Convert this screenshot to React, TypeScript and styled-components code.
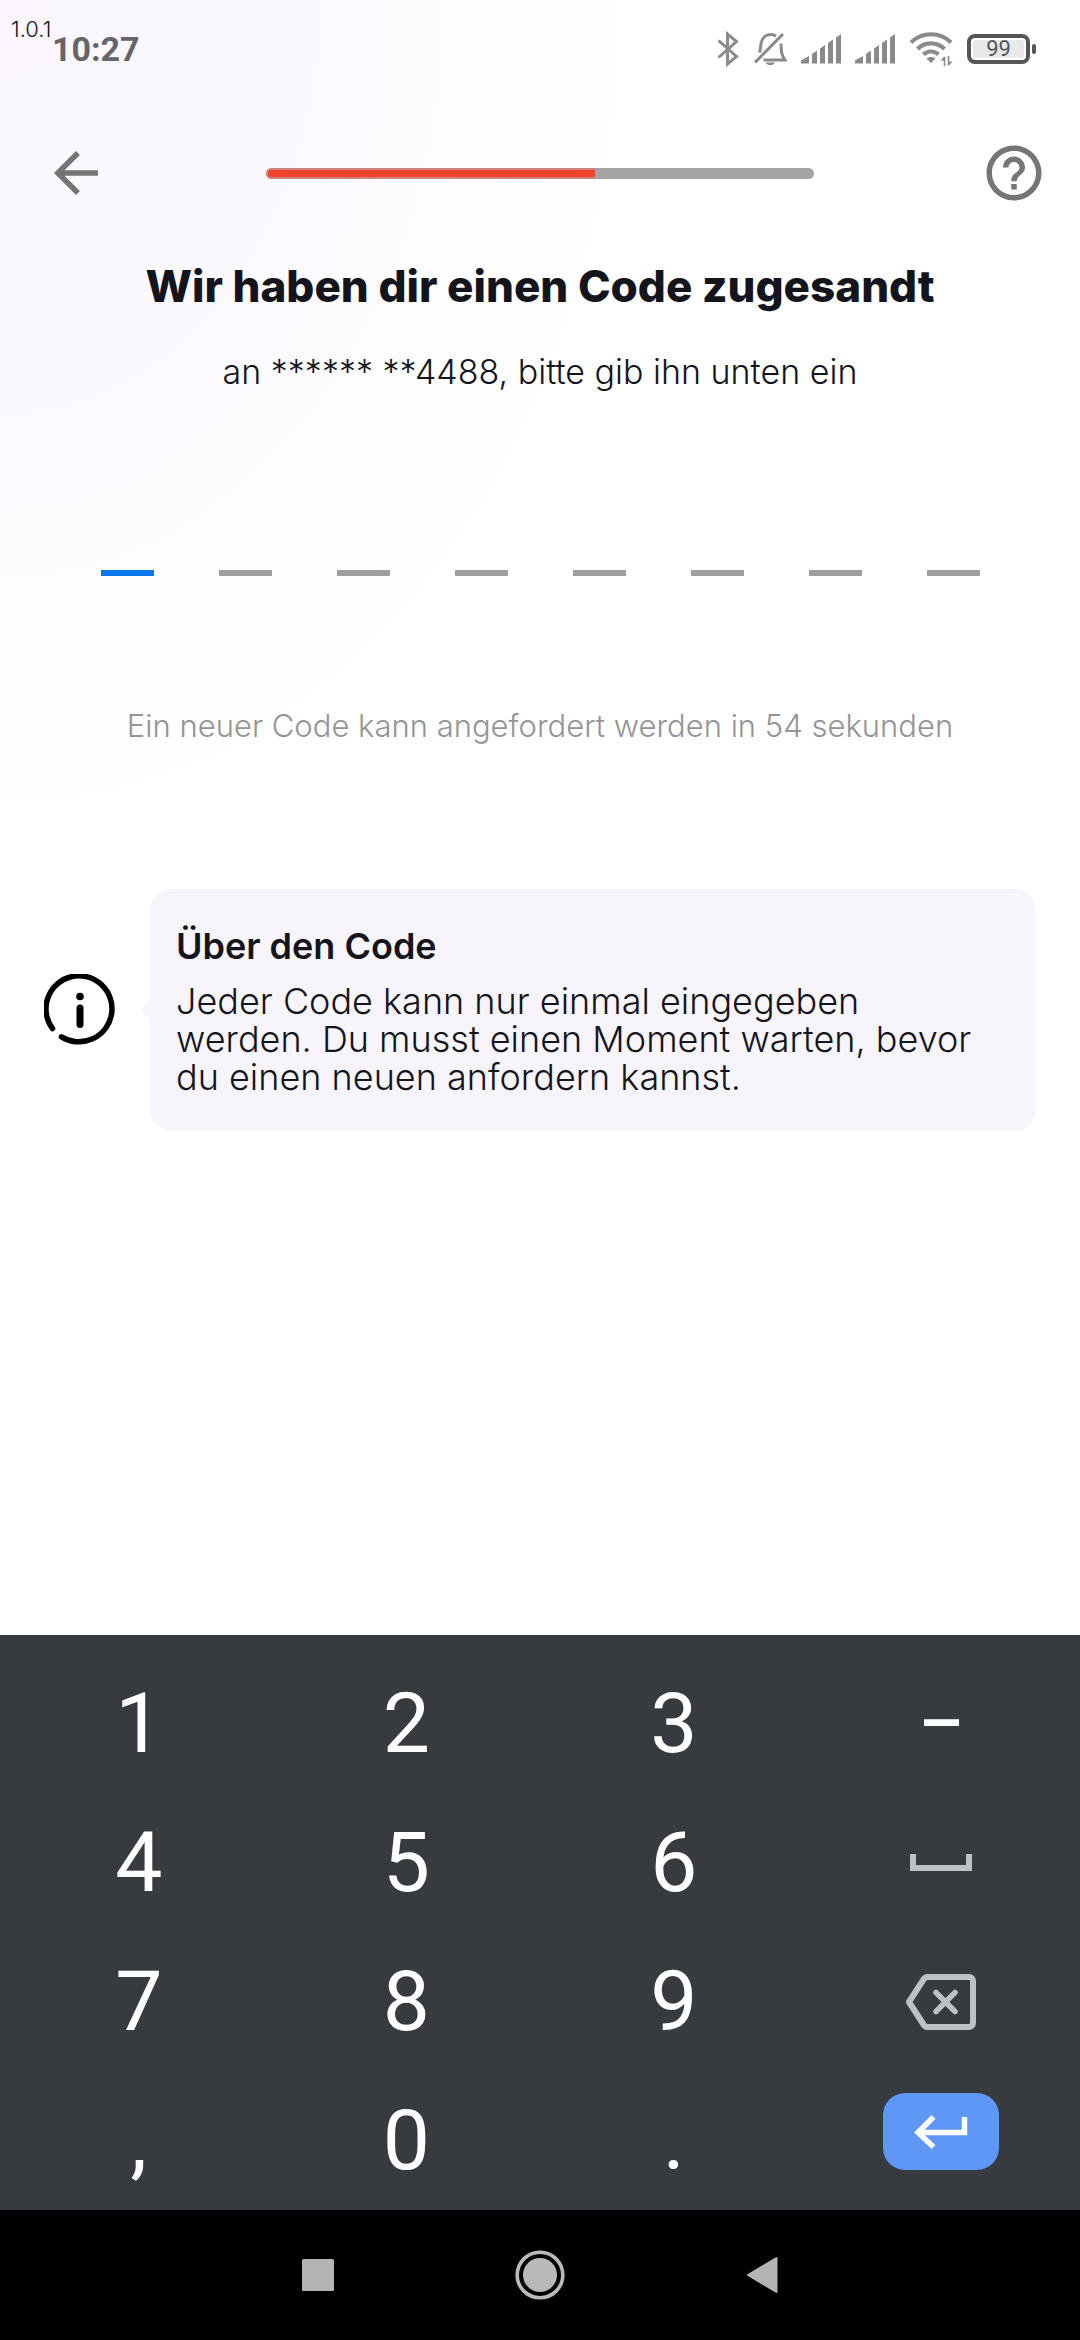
import React, { useState } from "react";
import styled, { createGlobalStyle } from "styled-components";

const GlobalStyle = createGlobalStyle`
  *, *::before, *::after { box-sizing: border-box; }
  html, body { margin: 0; padding: 0; }
  body { background: #ffffff; }
  button, input { font: inherit; }
`;

const brand = `Inter, Lato, "Liberation Sans", sans-serif`;
const system = `Roboto, "Liberation Sans", sans-serif`;

const Screen = styled.div`
  position: relative;
  display: flex;
  flex-direction: column;
  min-height: 100vh;
  font-family: ${brand};
  color: #14151c;
  background: radial-gradient(ellipse 60% 36% at 0 0, #faf5fe 0%, #fcfafe 55%, #ffffff 100%);
`;

const Version = styled.span`
  position: absolute;
  top: 16px;
  left: 11px;
  font-size: 22px;
  line-height: 26px;
  font-weight: 300;
`;

const StatusBar = styled.header`
  display: flex;
  align-items: center;
  justify-content: space-between;
  height: 98px;
  padding: 0 44px 0 52px;
  font-family: ${system};
  color: #8a8a8a;
`;

const Clock = styled.time`
  font-size: 34px;
  font-weight: 700;
  color: #66666a;
`;

const StatusIcons = styled.div`
  display: flex;
  align-items: center;
  gap: 14px;
`;

const Battery = styled.div`
  display: flex;
  align-items: center;
  gap: 2px;
  &::after {
    content: "";
    width: 4px;
    height: 10px;
    border-radius: 2px;
    background: #555555;
  }
`;

const BatteryBody = styled.span`
  display: flex;
  align-items: center;
  justify-content: center;
  width: 63px;
  height: 30px;
  border: 4px solid #555555;
  border-radius: 8px;
  background: #e9e9e9;
  box-shadow: inset 0 0 0 2px #ffffff;
  font-size: 22px;
  line-height: 22px;
  color: #555555;
`;

const TopBar = styled.nav`
  display: grid;
  grid-template-columns: 1fr 54% 1fr;
  align-items: center;
  height: 150px;
  padding: 0 33px;
`;

const IconButton = styled.button`
  display: flex;
  align-items: center;
  justify-content: center;
  width: 66px;
  height: 66px;
  padding: 0;
  border: 0;
  background: none;
  color: #757575;
`;

const BackButton = styled(IconButton)`
  margin-left: 10px;
`;

const HelpButton = styled(IconButton)`
  justify-self: end;
`;

const Progress = styled.div`
  height: 11px;
  border-radius: 6px;
  background: #a4a4a4;
  overflow: hidden;
`;

const ProgressFill = styled.div`
  height: 100%;
  border: 2px solid #cf827d;
  border-right: 0;
  border-radius: 6px 0 0 6px;
  background: #f0442f;
`;

const Main = styled.main`
  display: flex;
  flex: 1;
  flex-direction: column;
`;

const Title = styled.h1`
  margin: 11px 0 0;
  font-size: 44px;
  line-height: 54px;
  font-weight: 800;
  text-align: center;
`;

const Subtitle = styled.p`
  margin: 37px 0 0;
  font-size: 34px;
  line-height: 44px;
  font-weight: 300;
  text-align: center;
`;

const CodeRow = styled.fieldset`
  display: flex;
  justify-content: center;
  gap: 65px;
  margin: 110px 0 0;
  padding: 0;
  border: 0;
`;

const Digit = styled.input`
  width: 53px;
  height: 72px;
  padding: 0;
  border: 0;
  border-bottom: 6px solid #9f9fa1;
  border-radius: 0;
  outline: 0;
  background: transparent;
  font-size: 44px;
  text-align: center;
  ${(p: { $active?: boolean }) => p.$active && "border-bottom-color: #0a78e8;"}
`;

const Timer = styled.p`
  margin: 130px 0 0;
  font-size: 31px;
  line-height: 40px;
  font-weight: 300;
  text-align: center;
  color: #949496;
`;

const Info = styled.section`
  display: flex;
  align-items: center;
  gap: 34px;
  margin: 143px 44px 40px;
`;

const Card = styled.div`
  position: relative;
  flex: 1;
  padding: 35px 50px 35px 26px;
  border-radius: 22px;
  background: #f7f4fb;
  &::before {
    content: "";
    position: absolute;
    top: 113px;
    left: -6px;
    width: 16px;
    height: 16px;
    border-radius: 4px;
    background: #f7f4fb;
    transform: rotate(45deg);
  }
`;

const CardTitle = styled.h2`
  margin: 0 0 14px;
  font-size: 36px;
  line-height: 44px;
  font-weight: 600;
`;

const CardText = styled.p`
  margin: 0;
  font-size: 36px;
  line-height: 38px;
  font-weight: 300;
`;

const Keyboard = styled.section`
  display: grid;
  grid-template-columns: repeat(4, 1fr);
  grid-auto-rows: 139px;
  padding: 19px 5px 0;
  background: #373a3e;
`;

const Key = styled.button`
  display: flex;
  align-items: center;
  justify-content: center;
  padding: 0;
  border: 0;
  background: none;
  font-family: ${system};
  font-size: ${(p: { $symbol?: boolean }) => (p.$symbol ? "70px" : "84px")};
  font-weight: ${(p: { $symbol?: boolean }) => (p.$symbol ? 500 : 400)};
  line-height: 100px;
  color: #ffffff;
`;

const EnterKey = styled(Key)`
  padding-bottom: 18px;
`;

const EnterCap = styled.span`
  display: flex;
  align-items: center;
  justify-content: center;
  width: 116px;
  height: 77px;
  border-radius: 22px;
  background: #5e97f6;
`;

const NavBar = styled.nav`
  display: flex;
  align-items: center;
  justify-content: center;
  height: 130px;
  background: #000000;
`;

const NavButton = styled.button`
  display: flex;
  align-items: center;
  justify-content: center;
  width: 222px;
  height: 100%;
  padding: 0;
  border: 0;
  background: none;
`;

const BluetoothIcon = () => (
  <svg width="22" height="36" viewBox="0 0 22 36" fill="none" stroke="currentColor" strokeWidth="3" aria-hidden="true">
    <path d="M1.5 9.5 19.5 25.5 10.5 33V3L19.5 10.5 1.5 26.5" />
  </svg>
);

const BellOffIcon = () => (
  <svg width="34" height="34" viewBox="0 0 34 34" fill="none" stroke="currentColor" strokeWidth="3" aria-hidden="true">
    <path d="M2 30.5 30 2" />
    <path d="M6.5 20.5C7.5 18 7.5 15 8 11.5 9 5.5 13 2.5 17.5 2.5c2 0 4 .5 5.500 1.800M28 11.500c.3 8 .3 11.500 4 16.500H10.500" />
    <path d="M12.5 30.5h9.500c-1 2-2.700 2.700-4.700 2.700s-3.800-.7-4.800-2.700Z" fill="currentColor" stroke="none" />
  </svg>
);

const SignalIcon = () => (
  <svg width="40" height="30" viewBox="0 0 40 30" fill="currentColor" aria-hidden="true">
    <path d="M0 29.5v-3l8-4.500v7.500ZM11 29.500V20l5-3.500v13ZM19 29.500V14.500l5-3.500v18.500ZM27 29.500V9l5-3.500v24ZM35 29.500V3.500l5-3.500v29.500Z" />
  </svg>
);

const WifiIcon = () => (
  <svg width="44" height="34" viewBox="0 0 44 34" fill="none" stroke="currentColor" strokeWidth="4.2" aria-hidden="true">
    <path d="M2 10.5C13-.5 31-.5 42 10.5M8.5 17C16 9.5 28 9.5 35.5 17M14.5 22.500c4.300-4 10.700-4 15 0" />
    <path d="M17.5 26.5c2.500-2 6.500-2 9 0l-4.500 4.500Z" fill="currentColor" stroke="none" />
    <path d="M35.5 25v9M39.5 24v9" strokeWidth="1.6" />
    <path d="m31.5 28.5 4-4.500v4.500ZM43.500 29.500l-4 4.500v-4.500Z" fill="currentColor" stroke="none" />
  </svg>
);

const BackIcon = () => (
  <svg width="66" height="66" viewBox="0 0 24 24" fill="currentColor" aria-hidden="true">
    <path d="M20 11H7.83l5.590-5.590L12 4l-8 8 8 8 1.410-1.410L7.830 13H20v-2z" />
  </svg>
);

const HelpIcon = () => (
  <svg width="66" height="66" viewBox="0 0 24 24" fill="currentColor" aria-hidden="true">
    <path d="M11 18h2v-2h-2v2zm1-16C6.480 2 2 6.480 2 12s4.480 10 10 10 10-4.480 10-10S17.520 2 12 2zm0 18c-4.410 0-8-3.590-8-8s3.590-8 8-8 8 3.590 8 8-3.590 8-8 8zm0-14c-2.210 0-4 1.790-4 4h2c0-1.100.9-2 2-2s2 .9 2 2c0 2-3 1.750-3 5h2c0-2.250 3-2.500 3-5 0-2.210-1.790-4-4-4z" />
  </svg>
);

const InfoIcon = () => (
  <svg width="72" height="72" viewBox="0 0 72 72" fill="none" stroke="#000000" strokeWidth="5.5" strokeLinecap="round" aria-hidden="true">
    <path d="M8.5 54.5A33 33 0 1 1 17.5 62.8" />
    <path d="M36 34v16.5" strokeWidth="7" />
    <circle cx="36" cy="22.5" r="3.8" fill="#000000" stroke="none" />
  </svg>
);

const SpaceIcon = () => (
  <svg width="62" height="17" viewBox="0 0 62 17" fill="none" stroke="#bdc1c6" strokeWidth="6" aria-hidden="true">
    <path d="M3 0v14h56V0" />
  </svg>
);

const BackspaceIcon = () => (
  <svg width="70" height="56" viewBox="0 0 70 56" fill="none" stroke="#bdc1c6" strokeWidth="6" strokeLinejoin="round" strokeLinecap="round" aria-hidden="true">
    <path d="M21.5 3H63a4 4 0 0 1 4 4v42a4 4 0 0 1-4 4H21.5a5 5 0 0 1-4-2.5L3 28 17.5 5.5a5 5 0 0 1 4-2.5Z" />
    <path d="m30 18.5 19 19M49 18.5l-19 19" strokeWidth="5.5" />
  </svg>
);

const EnterIcon = () => (
  <svg width="54" height="34" viewBox="0 0 54 34" fill="none" stroke="#ffffff" strokeWidth="5.5" aria-hidden="true">
    <path d="M50.5 2v15.5H5M19.5 2 4 17.500 19.500 32" />
  </svg>
);

const keys: { label: string; face: React.ReactNode; symbol?: boolean }[] = [
  { label: "1", face: "1" },
  { label: "2", face: "2" },
  { label: "3", face: "3" },
  { label: "Strich", face: "–", symbol: true },
  { label: "4", face: "4" },
  { label: "5", face: "5" },
  { label: "6", face: "6" },
  { label: "Leerzeichen", face: <SpaceIcon /> },
  { label: "7", face: "7" },
  { label: "8", face: "8" },
  { label: "9", face: "9" },
  { label: "Löschen", face: <BackspaceIcon /> },
  { label: "Komma", face: "," },
  { label: "0", face: "0" },
  { label: "Punkt", face: "." },
];

const CODE_LENGTH = 8;

export default function App() {
  const [code, setCode] = useState<string[]>(Array(CODE_LENGTH).fill(""));
  const [active, setActive] = useState(0);

  const press = (label: string) => {
    if (label === "Löschen") {
      const at = Math.max(0, code[active] ? active : active - 1);
      setCode(code.map((c, i) => (i === at ? "" : c)));
      setActive(at);
    } else if (/^\d$/.test(label)) {
      setCode(code.map((c, i) => (i === active ? label : c)));
      setActive(Math.min(CODE_LENGTH - 1, active + 1));
    }
  };

  return (
    <Screen>
      <GlobalStyle />
      <StatusBar>
        <Clock>10:27</Clock>
        <StatusIcons>
          <BluetoothIcon />
          <BellOffIcon />
          <SignalIcon />
          <SignalIcon />
          <WifiIcon />
          <Battery>
            <BatteryBody>99</BatteryBody>
          </Battery>
        </StatusIcons>
      </StatusBar>
      <Version>1.0.1</Version>
      <TopBar>
        <BackButton aria-label="Zurück">
          <BackIcon />
        </BackButton>
        <Progress role="progressbar" aria-label="Fortschritt" aria-valuenow={60} aria-valuemin={0} aria-valuemax={100}>
          <ProgressFill style={{ width: "60%" }} />
        </Progress>
        <HelpButton aria-label="Hilfe">
          <HelpIcon />
        </HelpButton>
      </TopBar>
      <Main>
        <Title>Wir haben dir einen Code zugesandt</Title>
        <Subtitle>an ****** **4488, bitte gib ihn unten ein</Subtitle>
        <CodeRow aria-label="Code">
          {code.map((value, i) => (
            <Digit
              key={i}
              aria-label={`Ziffer ${i + 1}`}
              inputMode="numeric"
              maxLength={1}
              value={value}
              $active={i === active}
              onFocus={() => setActive(i)}
              onChange={(e) => setCode(code.map((c, n) => (n === i ? e.target.value : c)))}
            />
          ))}
        </CodeRow>
        <Timer>Ein neuer Code kann angefordert werden in 54 sekunden</Timer>
        <Info>
          <InfoIcon />
          <Card>
            <CardTitle>Über den Code</CardTitle>
            <CardText>
              Jeder Code kann nur einmal eingegeben werden. Du musst einen Moment warten, bevor du einen neuen anfordern
              kannst.
            </CardText>
          </Card>
        </Info>
      </Main>
      <Keyboard aria-label="Tastatur">
        {keys.map((key) => (
          <Key key={key.label} aria-label={key.label} $symbol={key.symbol} onClick={() => press(key.label)}>
            {key.face}
          </Key>
        ))}
        <EnterKey aria-label="Eingabe">
          <EnterCap>
            <EnterIcon />
          </EnterCap>
        </EnterKey>
      </Keyboard>
      <NavBar aria-label="System">
        <NavButton aria-label="Übersicht">
          <svg width="32" height="32" viewBox="0 0 32 32" aria-hidden="true">
            <rect width="32" height="32" rx="1.5" fill="#b4b4b4" />
          </svg>
        </NavButton>
        <NavButton aria-label="Startseite">
          <svg width="50" height="50" viewBox="0 0 50 50" aria-hidden="true">
            <circle cx="25" cy="25" r="22.8" fill="none" stroke="#b9b9b9" strokeWidth="3.6" />
            <circle cx="25" cy="25" r="17" fill="#b9b9b9" />
          </svg>
        </NavButton>
        <NavButton aria-label="Zurück zum System">
          <svg width="32" height="38" viewBox="0 0 32 38" aria-hidden="true">
            <path d="M30.5 2v34L2 19Z" fill="#b4b4b4" stroke="#b4b4b4" strokeWidth="2" strokeLinejoin="round" />
          </svg>
        </NavButton>
      </NavBar>
    </Screen>
  );
}
